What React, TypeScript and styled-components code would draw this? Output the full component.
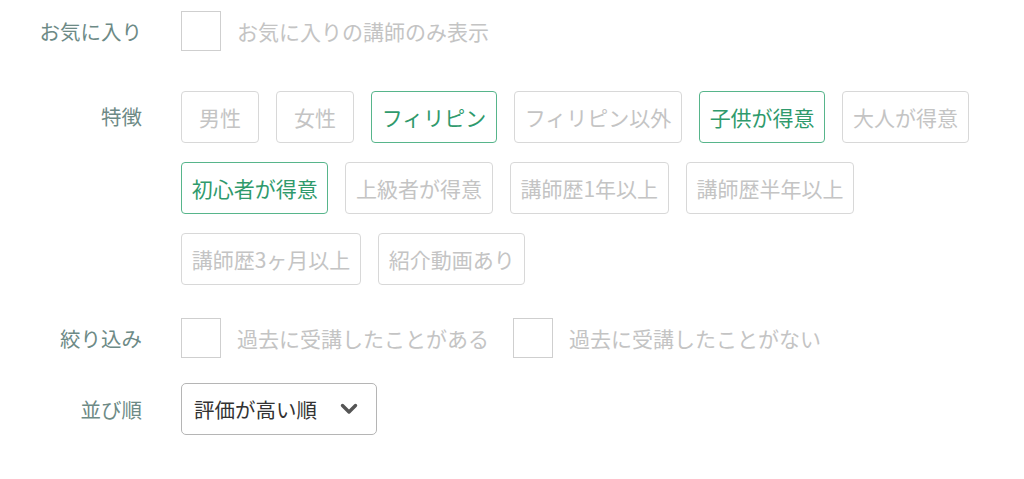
import React, { useState } from 'react';
import styled, { createGlobalStyle } from 'styled-components';

const GlobalStyle = createGlobalStyle`
  body {
    margin: 0;
    background: #ffffff;
    font-family: "Noto Sans CJK JP", "Noto Sans", sans-serif;
  }
`;

const Form = styled.div`
  display: flex;
  flex-direction: column;
  padding: 11px 0 0 0;
`;

const Row = styled.div<{ $align?: string; $mb: number }>`
  display: flex;
  align-items: ${(p) => p.$align || 'center'};
  margin-bottom: ${(p) => p.$mb}px;
`;

const Label = styled.div<{ $top?: number }>`
  width: 142px;
  flex-shrink: 0;
  text-align: right;
  font-size: 20.5px;
  line-height: 28px;
  color: #6d8a86;
  margin-right: 39px;
  margin-top: ${(p) => p.$top || 0}px;
`;

const Content = styled.div`
  display: flex;
  flex-wrap: wrap;
  align-items: center;
  max-width: 820px;
`;

const CheckWrap = styled.label`
  display: flex;
  align-items: center;
  margin-right: 24px;
  cursor: pointer;
`;

const Box = styled.span<{ $on: boolean }>`
  width: 40px;
  height: 40px;
  box-sizing: border-box;
  border: 1px solid #cfcfcf;
  background: ${(p) => (p.$on ? '#3aa57a' : '#fff')};
  margin-right: 16px;
`;

const CheckText = styled.span`
  font-size: 21px;
  line-height: 28px;
  color: #c4c4c4;
`;

const Chips = styled.div`
  display: flex;
  flex-wrap: wrap;
  width: 820px;
`;

const Chip = styled.button<{ $on: boolean }>`
  height: 52px;
  min-width: 78px;
  box-sizing: border-box;
  padding: 0 9.7px;
  margin: 0 17px 19px 0;
  border-radius: 4px;
  border: 1px solid ${(p) => (p.$on ? '#57b58b' : '#d8d8d8')};
  background: #fff;
  color: ${(p) => (p.$on ? '#2f9a6c' : '#c4c4c4')};
  font-family: inherit;
  font-size: 21px;
  line-height: 28px;
  cursor: pointer;
`;

const Select = styled.div`
  width: 196px;
  height: 52px;
  box-sizing: border-box;
  border: 1px solid #b5b5b5;
  border-radius: 5px;
  display: flex;
  align-items: center;
  justify-content: space-between;
  padding: 0 18px 0 12px;
  font-size: 20.5px;
  color: #333;
  cursor: pointer;
`;

const features = [
  '男性',
  '女性',
  'フィリピン',
  'フィリピン以外',
  '子供が得意',
  '大人が得意',
  '初心者が得意',
  '上級者が得意',
  '講師歴1年以上',
  '講師歴半年以上',
  '講師歴3ヶ月以上',
  '紹介動画あり',
];

const Check: React.FC<{ text: string }> = ({ text }) => {
  const [on, setOn] = useState(false);
  return (
    <CheckWrap onClick={() => setOn(!on)}>
      <Box $on={on} />
      <CheckText>{text}</CheckText>
    </CheckWrap>
  );
};

const App: React.FC = () => {
  const [selected, setSelected] = useState<string[]>(['フィリピン', '子供が得意', '初心者が得意']);

  const toggle = (f: string) =>
    setSelected((s) => (s.includes(f) ? s.filter((x) => x !== f) : [...s, f]));

  return (
    <>
      <GlobalStyle />
      <Form>
        <Row $mb={40}>
          <Label>お気に入り</Label>
          <Content>
            <Check text="お気に入りの講師のみ表示" />
          </Content>
        </Row>
        <Row $align="flex-start" $mb={14}>
          <Label $top={11}>特徴</Label>
          <Chips>
            {features.map((f) => (
              <Chip key={f} $on={selected.includes(f)} onClick={() => toggle(f)}>
                {f}
              </Chip>
            ))}
          </Chips>
        </Row>
        <Row $mb={25}>
          <Label>絞り込み</Label>
          <Content>
            <Check text="過去に受講したことがある" />
            <Check text="過去に受講したことがない" />
          </Content>
        </Row>
        <Row $mb={0}>
          <Label>並び順</Label>
          <Select>
            <span>評価が高い順</span>
            <svg width="18" height="12" viewBox="0 0 18 12">
              <path d="M2.5 2.5 L9 9 L15.5 2.5" fill="none" stroke="#555" strokeWidth="3.4" strokeLinecap="round" strokeLinejoin="round" />
            </svg>
          </Select>
        </Row>
      </Form>
    </>
  );
};

export default App;
